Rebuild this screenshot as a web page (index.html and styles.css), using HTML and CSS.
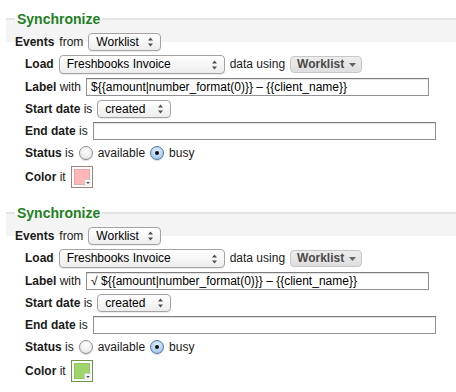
FILE: index.html
```html
<!DOCTYPE html>
<html lang="en">
    <head>
        <meta charset="UTF-8" />
        <title>Synchronize</title>
        <link rel="stylesheet" href="styles.css">
    </head>
    <body>
        <fieldset class="sync">
            <legend>Synchronize</legend>
            <div class="row">
                <b>Events</b> from
                <span class="select events-select">Worklist
                    <svg class="arrows" width="7" height="10" viewBox="0 0 7 10"><path d="M3.5 0.5 L6 3.5 H1 Z M3.5 9.5 L6 6.5 H1 Z"/></svg>
                </span>
            </div>
            <div class="fields">
                <div class="row">
                    <b>Load</b>
                    <span class="select load-select">Freshbooks Invoice
                        <svg class="arrows" width="7" height="10" viewBox="0 0 7 10"><path d="M3.5 0.5 L6 3.5 H1 Z M3.5 9.5 L6 6.5 H1 Z"/></svg>
                    </span>
                    <span>data using</span>
                    <span class="menu-btn">Worklist
                        <svg class="caret" width="7" height="4" viewBox="0 0 7 4"><path d="M0 0 H7 L3.5 4 Z"/></svg>
                    </span>
                </div>
                <div class="row">
                    <span><b>Label</b> with</span>
                    <span class="input label-input">${{amount|number_format(0)}} – {{client_name}}</span>
                </div>
                <div class="row">
                    <span><b>Start date</b> is</span>
                    <span class="select start-select">created
                        <svg class="arrows" width="7" height="10" viewBox="0 0 7 10"><path d="M3.5 0.5 L6 3.5 H1 Z M3.5 9.5 L6 6.5 H1 Z"/></svg>
                    </span>
                </div>
                <div class="row">
                    <span><b>End date</b> is</span>
                    <span class="input end-input"></span>
                </div>
                <div class="row status-row">
                    <span><b>Status</b> is</span>
                    <span class="radio"></span>
                    <span>available</span>
                    <span class="radio checked"></span>
                    <span>busy</span>
                </div>
                <div class="row">
                    <span><b>Color</b> it</span>
                    <span class="swatch pink"><span class="swatch-fill"></span><span class="swatch-tab"></span></span>
                </div>
            </div>
        </fieldset>

        <fieldset class="sync">
            <legend>Synchronize</legend>
            <div class="row">
                <b>Events</b> from
                <span class="select events-select">Worklist
                    <svg class="arrows" width="7" height="10" viewBox="0 0 7 10"><path d="M3.5 0.5 L6 3.5 H1 Z M3.5 9.5 L6 6.5 H1 Z"/></svg>
                </span>
            </div>
            <div class="fields">
                <div class="row">
                    <b>Load</b>
                    <span class="select load-select">Freshbooks Invoice
                        <svg class="arrows" width="7" height="10" viewBox="0 0 7 10"><path d="M3.5 0.5 L6 3.5 H1 Z M3.5 9.5 L6 6.5 H1 Z"/></svg>
                    </span>
                    <span>data using</span>
                    <span class="menu-btn">Worklist
                        <svg class="caret" width="7" height="4" viewBox="0 0 7 4"><path d="M0 0 H7 L3.5 4 Z"/></svg>
                    </span>
                </div>
                <div class="row">
                    <span><b>Label</b> with</span>
                    <span class="input label-input">√ ${{amount|number_format(0)}} – {{client_name}}</span>
                </div>
                <div class="row">
                    <span><b>Start date</b> is</span>
                    <span class="select start-select">created
                        <svg class="arrows" width="7" height="10" viewBox="0 0 7 10"><path d="M3.5 0.5 L6 3.5 H1 Z M3.5 9.5 L6 6.5 H1 Z"/></svg>
                    </span>
                </div>
                <div class="row">
                    <span><b>End date</b> is</span>
                    <span class="input end-input"></span>
                </div>
                <div class="row status-row">
                    <span><b>Status</b> is</span>
                    <span class="radio"></span>
                    <span>available</span>
                    <span class="radio checked"></span>
                    <span>busy</span>
                </div>
                <div class="row">
                    <span><b>Color</b> it</span>
                    <span class="swatch green"><span class="swatch-fill"></span><span class="swatch-tab"></span></span>
                </div>
            </div>
        </fieldset>
    </body>
</html>
```

FILE: styles.css
```css
:root {
    --green: #1f801f;
    --text: #1a1a1a;
    --band: #f4f4f4;
    --band-line: #e4e4e4;
    --field-border: #919191;
}

* {
    box-sizing: border-box;
}

body {
    margin: 0;
    padding-top: 11px;
    font-family: "Liberation Sans", Arial, sans-serif;
    font-size: 12px;
    color: var(--text);
    background: #fff;
    overflow: hidden;
}

.sync {
    margin: 0 0 17px 6px;
    padding: 6px 0 0 9px;
    border: 0;
    border-top: 2px solid var(--band-line);
    background: linear-gradient(var(--band), var(--band)) no-repeat 0 0 / 100% 22px;
    display: flex;
    flex-direction: column;
    gap: 4px;
}

.sync legend {
    padding: 0 2px;
    font-size: 14px;
    line-height: 16px;
    font-weight: 700;
    color: var(--green);
}

.fields {
    display: flex;
    flex-direction: column;
    gap: 4px;
    padding-left: 10px;
}

.row {
    display: flex;
    align-items: center;
    gap: 5px;
    white-space: nowrap;
    line-height: 15px;
}

b {
    font-weight: 700;
}

.select {
    display: inline-flex;
    align-items: center;
    justify-content: space-between;
    height: 18px;
    padding: 0 6px 0 7px;
    border: 1px solid #a3a3a3;
    border-radius: 4px;
    background: linear-gradient(#ffffff, #ededed);
    box-shadow: 0 1px 1px rgba(0, 0, 0, 0.08);
    color: #000;
}

.arrows {
    fill: #4d4d4d;
}

.events-select {
    width: 73px;
}

.load-select {
    width: 166px;
    height: 19px;
}

.start-select {
    width: 74px;
}

.menu-btn {
    display: inline-flex;
    align-items: center;
    gap: 5px;
    height: 17px;
    padding: 0 5px 0 6px;
    border: 1px solid #c6c6c6;
    border-radius: 4px;
    background: linear-gradient(#ededed, #dedede);
    font-weight: 700;
    color: #4a4a4a;
}

.caret {
    fill: #666;
}

.input {
    display: inline-flex;
    align-items: center;
    width: 343px;
    height: 18px;
    padding: 0 4px;
    border: 1px solid var(--field-border);
    border-top-color: #7d7d7d;
    box-shadow: inset 0 1px 1px rgba(0, 0, 0, 0.12);
    background: #fff;
    color: #000;
    overflow: hidden;
}

.status-row {
    height: 18px;
}

.radio {
    width: 14px;
    height: 14px;
    border-radius: 50%;
    border: 1px solid #8c8c8c;
    background: radial-gradient(circle at 50% 30%, #ffffff, #e2e2e2);
    box-shadow: 0 1px 1px rgba(0, 0, 0, 0.15);
    display: inline-flex;
    align-items: center;
    justify-content: center;
}

.radio.checked {
    border-color: #5579a8;
    background: radial-gradient(circle at 50% 35%, #e4f0fb, #8fbbe8);
}

.radio.checked::after {
    content: "";
    width: 4px;
    height: 4px;
    border-radius: 50%;
    background: #111;
}

.swatch {
    position: relative;
    display: inline-flex;
    width: 22px;
    height: 22px;
    padding: 2px;
    border: 1px solid #a58080;
    background: #fff;
}

.swatch-fill {
    flex: 1;
    border: 1px solid rgba(0, 0, 0, 0.08);
}

.pink .swatch-fill {
    background: #ffb6b6;
}

.green {
    border-color: #6c9544;
}

.green .swatch-fill {
    background: #9fd66b;
}

.swatch-tab {
    position: absolute;
    right: 1px;
    bottom: 1px;
    width: 7px;
    height: 7px;
    background: #f4f4f4;
    border-top: 1px solid #ccc;
    border-left: 1px solid #ccc;
}

.swatch-tab::after {
    content: "";
    position: absolute;
    left: 1px;
    top: 2px;
    border-left: 2px solid transparent;
    border-right: 2px solid transparent;
    border-top: 2px solid #555;
}
```
